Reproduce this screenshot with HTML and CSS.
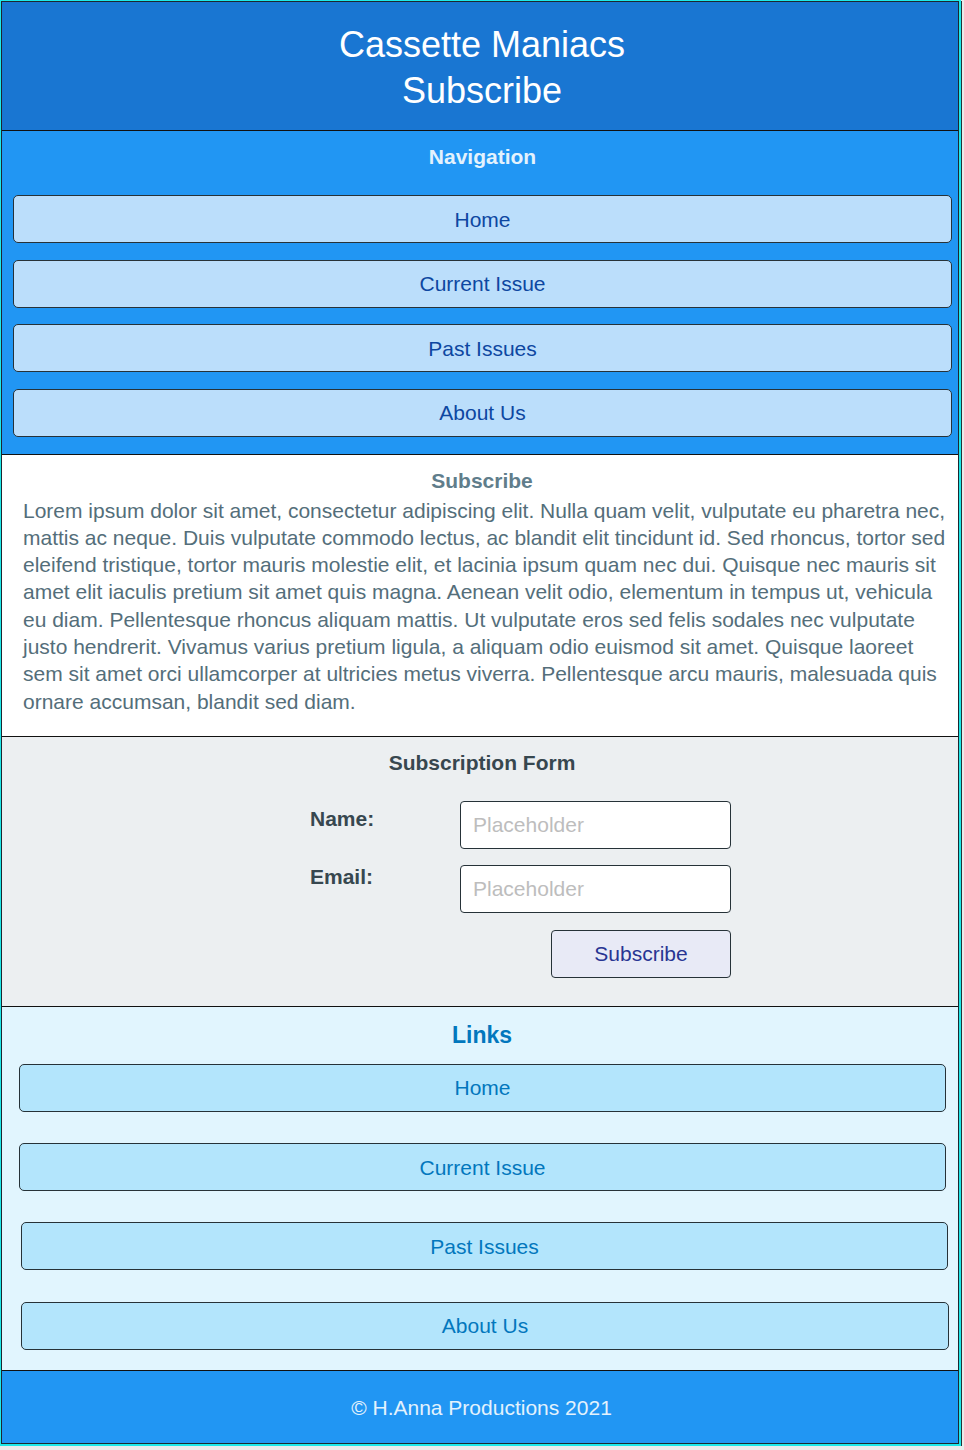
FILE: index.html
```html
<!DOCTYPE html>
<html lang="en">
<head>
<meta charset="utf-8">
<title>Cassette Maniacs - Subscribe</title>
<link rel="stylesheet" href="styles.css">
</head>
<body>
<div class="page">
  <div class="frame">
    <header class="site-header">
      <h1 class="site-title">Cassette Maniacs<br>Subscribe</h1>
    </header>
    <nav class="nav">
      <h2 class="nav-title">Navigation</h2>
      <div class="nav-list">
        <a class="nav-btn" href="#">Home</a>
        <a class="nav-btn" href="#">Current Issue</a>
        <a class="nav-btn" href="#">Past Issues</a>
        <a class="nav-btn" href="#">About Us</a>
      </div>
    </nav>
    <section class="intro">
      <h2 class="intro-title">Subscribe</h2>
      <p class="intro-text">Lorem ipsum dolor sit amet, consectetur adipiscing elit. Nulla quam velit, vulputate eu pharetra nec, mattis ac neque. Duis vulputate commodo lectus, ac blandit elit tincidunt id. Sed rhoncus, tortor sed eleifend tristique, tortor mauris molestie elit, et lacinia ipsum quam nec dui. Quisque nec mauris sit amet elit iaculis pretium sit amet quis magna. Aenean velit odio, elementum in tempus ut, vehicula eu diam. Pellentesque rhoncus aliquam mattis. Ut vulputate eros sed felis sodales nec vulputate justo hendrerit. Vivamus varius pretium ligula, a aliquam odio euismod sit amet. Quisque laoreet sem sit amet orci ullamcorper at ultricies metus viverra. Pellentesque arcu mauris, malesuada quis ornare accumsan, blandit sed diam.</p>
    </section>
    <section class="subscribe">
      <h2 class="subscribe-title">Subscription Form</h2>
      <form class="form">
        <label class="form-label form-label--name" for="name">Name:</label>
        <input class="form-input" id="name" type="text" placeholder="Placeholder">
        <label class="form-label" for="email">Email:</label>
        <input class="form-input" id="email" type="email" placeholder="Placeholder">
        <button class="form-btn" type="button">Subscribe</button>
      </form>
    </section>
    <section class="links">
      <h2 class="links-title">Links</h2>
      <div class="links-list">
        <a class="link-btn" href="#">Home</a>
        <a class="link-btn" href="#">Current Issue</a>
        <a class="link-btn link-btn--shift" href="#">Past Issues</a>
        <a class="link-btn link-btn--shift link-btn--wide" href="#">About Us</a>
      </div>
    </section>
    <footer class="site-footer">© H.Anna Productions 2021</footer>
  </div>
</div>
</body>
</html>
```

FILE: styles.css
```css
* { box-sizing: border-box; }

html, body {
  margin: 0;
  padding: 0;
}

body {
  background: #ebebeb;
  font-family: "Liberation Sans", Arial, sans-serif;
  font-size: 21px;
}

.page {
  width: 961px;
  border-style: solid;
  border-color: #1ee8e8;
  border-width: 1px 2px 2px 1px;
  box-shadow: 1px 1px 0 #263238;
}

.frame {
  border: 1px solid #1c2730;
  background: #ffffff;
}

/* Header */
.site-header {
  background: #1976d2;
  padding: 20px 0 16px 4px;
  border-bottom: 1px solid #111;
}

.site-title {
  margin: 0;
  text-align: center;
  color: #ffffff;
  font-weight: normal;
  font-size: 36px;
  line-height: 46px;
}

/* Navigation */
.nav {
  background: #2196f3;
  padding: 14px 6px 17px 11px;
  border-bottom: 1px solid #111;
}

.nav-title {
  margin: 0 0 26px;
  text-align: center;
  color: #e3f2fd;
  font-size: 21px;
  line-height: 24px;
}

.nav-list {
  display: flex;
  flex-direction: column;
  gap: 16.5px;
}

.nav-btn {
  display: flex;
  align-items: center;
  justify-content: center;
  height: 48px;
  padding-top: 1px;
  background: #bbdefb;
  border: 1px solid #263238;
  border-radius: 5px;
  color: #0d47a1;
  text-decoration: none;
  font-size: 21px;
}

/* Intro */
.intro {
  padding: 14px 10px 21px 21px;
  border-bottom: 1px solid #111;
  color: #546e7a;
}

.intro-title {
  margin: 0 0 4px;
  padding-right: 7px;
  text-align: center;
  font-size: 21px;
  line-height: 24px;
  color: #607d8b;
}

.intro-text {
  margin: 0;
  font-size: 21px;
  line-height: 27.3px;
}

/* Subscribe form */
.subscribe {
  background: #eceff1;
  padding: 14px 0 28px;
  border-bottom: 1px solid #111;
}

.subscribe-title {
  margin: 0 0 26px;
  padding-left: 4px;
  text-align: center;
  color: #37474f;
  font-size: 21px;
  line-height: 24px;
}

.form {
  display: grid;
  grid-template-columns: 150px 271px;
  row-gap: 16.5px;
  margin-left: 308px;
}

.form-label {
  color: #37474f;
  font-weight: bold;
  font-size: 21px;
  line-height: 23px;
}

.form-label--name {
  padding-top: 6px;
}

.form-input {
  height: 48px;
  width: 271px;
  border: 1px solid #263238;
  border-radius: 4px;
  background: #ffffff;
  padding: 0 12px;
  font-family: "Liberation Sans", Arial, sans-serif;
  font-size: 21px;
  color: #37474f;
}

.form-input::placeholder {
  color: #bdbdbd;
}

.form-btn {
  grid-column: 2;
  justify-self: end;
  width: 180px;
  height: 48px;
  background: #e8eaf6;
  border: 1px solid #263238;
  border-radius: 4px;
  color: #283593;
  font-family: "Liberation Sans", Arial, sans-serif;
  font-size: 21px;
}

/* Links */
.links {
  background: #e1f5fe;
  padding: 15px 0 20px 17px;
  border-bottom: 1px solid #111;
}

.links-title {
  margin: 0 0 16px;
  text-align: center;
  color: #0277bd;
  font-size: 23px;
  line-height: 26px;
  padding-right: 13px;
}

.links-list {
  display: flex;
  flex-direction: column;
  gap: 31.3px;
}

.link-btn {
  display: flex;
  align-items: center;
  justify-content: center;
  width: 927px;
  height: 48px;
  padding-top: 1px;
  background: #b3e5fc;
  border: 1px solid #263238;
  border-radius: 5px;
  color: #0277bd;
  text-decoration: none;
  font-size: 21px;
}

.link-btn--shift {
  margin-left: 2px;
}

.link-btn--wide {
  width: 928px;
}

/* Footer */
.site-footer {
  background: #2196f3;
  color: #e3f2fd;
  text-align: center;
  font-size: 21px;
  line-height: 24px;
  padding: 25px 0 23px 3px;
}
```
